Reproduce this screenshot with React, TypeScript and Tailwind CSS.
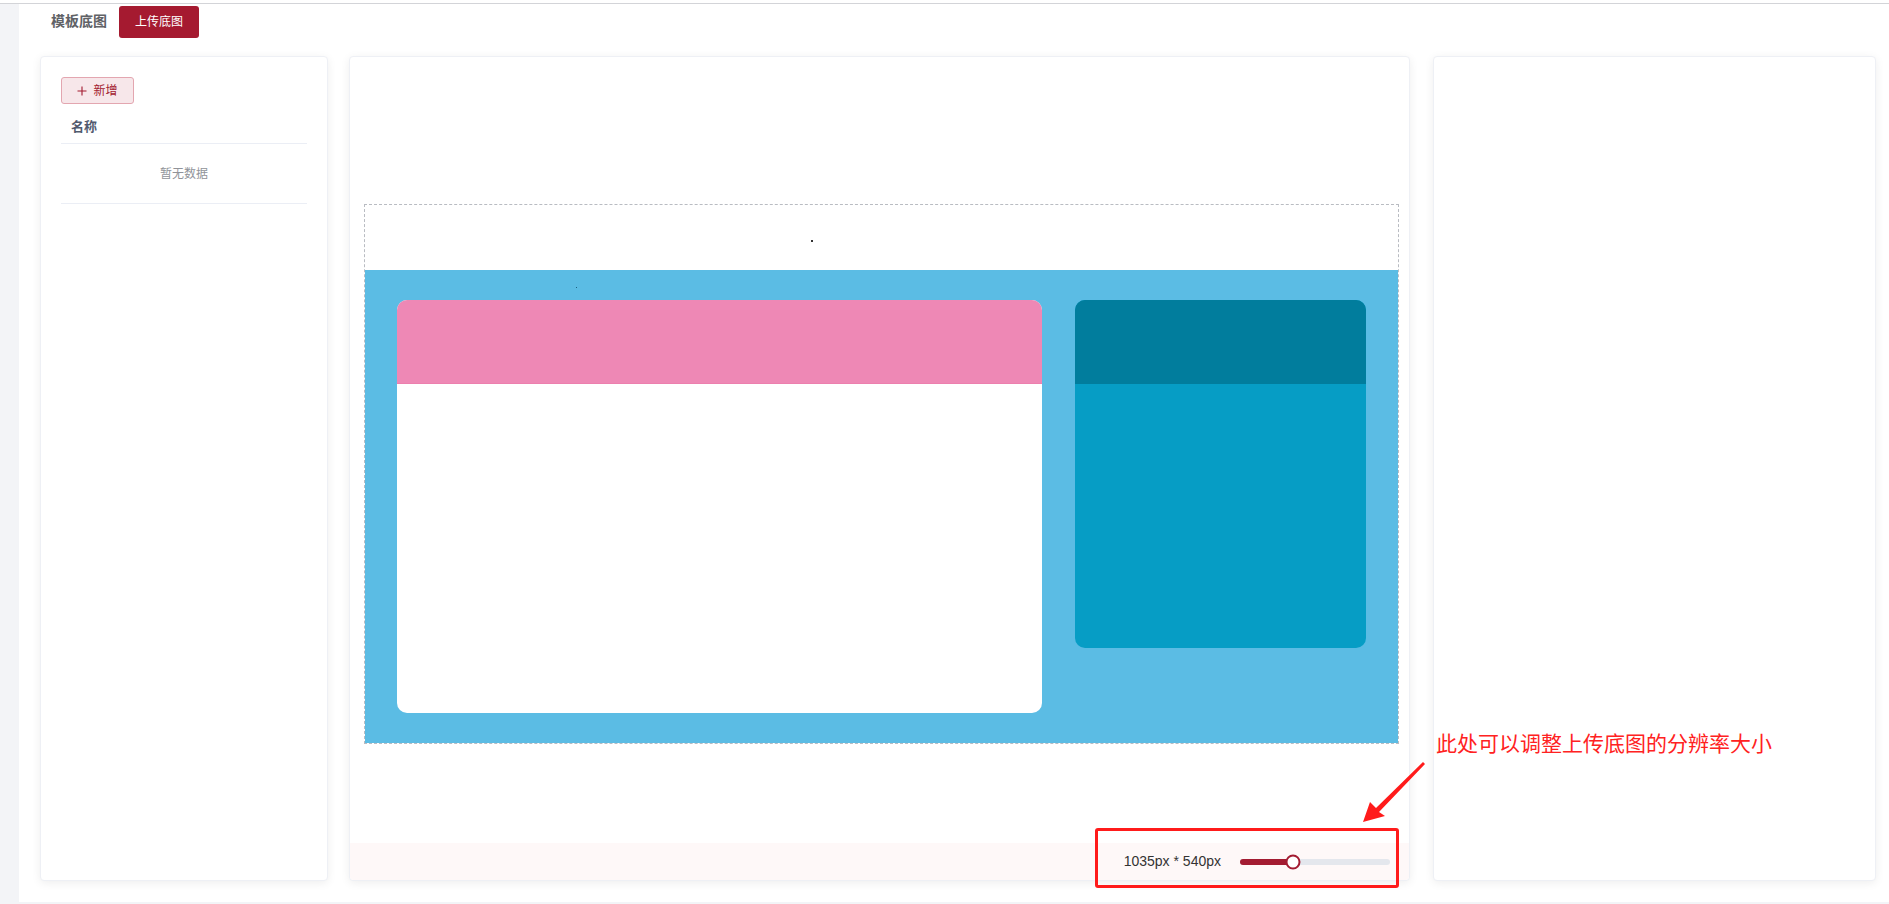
import React from "react";

const font = "font-['Liberation_Sans','Noto_Sans_CJK_SC',sans-serif]";

function CardShell({ className = "", children }: { className?: string; children?: React.ReactNode }) {
  return (
    <div
      className={`rounded-[4px] border border-[#eef0f5] bg-white shadow-[0_2px_10px_rgba(0,0,0,0.07)] ${className}`}
    >
      {children}
    </div>
  );
}

function TemplateList() {
  return (
    <CardShell className="w-[288px] h-[825px] px-[20px] pt-[20px]">
      <button
        type="button"
        className="flex h-[27px] w-[73px] items-center justify-center gap-[6px] rounded-[3px] border border-[#e3a6b0] bg-[#f7e7ea] text-[12px] text-[#a31a2f]"
      >
        <svg width="10" height="10" viewBox="0 0 10 10" className="text-[#a31a2f]">
          <path d="M5 0.5v9M0.5 5h9" stroke="currentColor" strokeWidth="1.1" />
        </svg>
        <span>新增</span>
      </button>
      <div className="mt-[6px] flex h-[34px] items-center border-b border-[#ebeef5] pl-[10px] text-[13px] font-bold text-[#515a6e]">
        名称
      </div>
      <div className="flex h-[60px] items-center justify-center border-b border-[#ebeef5] text-[12px] text-[#909399]">
        暂无数据
      </div>
    </CardShell>
  );
}

function Preview() {
  return (
    <div className="relative ml-[14px] mt-[147px] box-border h-[540px] w-[1035px] border border-dashed border-[#b9bcc2]">
      <div className="h-[65px] bg-white" />
      <div className="flex h-[473px] gap-[33px] bg-[#5bbce4] pl-[32px] pt-[30px]">
        <div className="flex h-[413px] w-[645px] flex-col overflow-hidden rounded-[10px] bg-white">
          <div className="h-[84px] border-b border-[#ec7fae] bg-[#ee88b5]" />
        </div>
        <div className="flex h-[348px] w-[291px] flex-col overflow-hidden rounded-[10px] bg-[#069dc5]">
          <div className="h-[84px] bg-[#017d9d]" />
        </div>
      </div>
      <span className="absolute left-[446px] top-[35px] h-[2px] w-[2px] bg-[#333]" />
      <span className="absolute left-[211px] top-[82px] h-px w-px bg-[#1d5f80]" />
    </div>
  );
}

function SizeBar({ width, height, ratio }: { width: number; height: number; ratio: number }) {
  return (
    <div className="mt-auto flex h-[37px] items-center justify-end gap-[19px] rounded-b-[4px] bg-[#fef8f8] pr-[19px]">
      <span className="text-[14px] text-[#333]">
        {width}px * {height}px
      </span>
      <div className="relative h-[6px] w-[150px] rounded-full bg-[#e4e7ed]">
        <div className="h-[6px] rounded-full bg-[#a31c32]" style={{ width: `${ratio * 150}px` }} />
        <div
          className="absolute top-1/2 h-[15px] w-[15px] -translate-x-1/2 -translate-y-1/2 rounded-full border-2 border-[#a31c32] bg-white"
          style={{ left: `${ratio * 150}px` }}
        />
      </div>
    </div>
  );
}

export default function App() {
  return (
    <div className={`relative h-[904px] w-[1889px] overflow-hidden bg-[#f3f4f7] ${font}`}>
      <div className="h-[3px] bg-white" />
      <div className="h-px bg-[#d3d4d8]" />
      <div className="ml-[19px] flex h-[898px] flex-col bg-white">
        <div className="flex h-[34px] items-center gap-[12px] pl-[32px]">
          <span className="text-[14px] font-bold text-[#606266]">模板底图</span>
          <button
            type="button"
            className="mt-[2px] h-[32px] rounded-[3px] bg-[#a51a30] px-[16px] text-[12px] text-white"
          >
            上传底图
          </button>
        </div>
        <div className="mt-[18px] flex pl-[21px]">
          <TemplateList />
          <CardShell className="ml-[21px] flex h-[825px] w-[1061px] flex-col">
            <Preview />
            <SizeBar width={1035} height={540} ratio={0.35} />
          </CardShell>
          <CardShell className="ml-[23px] h-[825px] w-[443px]" />
        </div>
      </div>

      {/* annotation overlay */}
      <div className="absolute left-[1095px] top-[828px] h-[60px] w-[304px] rounded-[3px] border-[3px] border-[#ff1b1b]" />
      <svg className="absolute left-[1355px] top-[755px]" width="75" height="75" viewBox="0 0 75 75">
        <polygon points="8,67 15,47 21,53 68,7 70,9 24,57 30,61" fill="#ff1b1b" />
      </svg>
      <div className="absolute left-[1436px] top-[729px] text-[21px] leading-[26px] text-[#ff2222] font-['Noto_Sans_CJK_SC',sans-serif]">
        此处可以调整上传底图的分辨率大小
      </div>
    </div>
  );
}
